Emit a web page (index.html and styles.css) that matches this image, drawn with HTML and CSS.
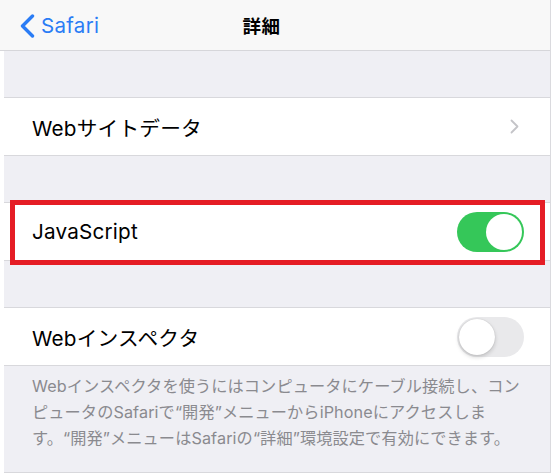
FILE: index.html
```html
<!DOCTYPE html>
<html lang="ja">
<head>
<meta charset="utf-8">
<link rel="stylesheet" href="styles.css">
</head>
<body>
<div class="screen">
  <header class="nav">
    <a class="back">
      <svg class="back-icon" width="16" height="24" viewBox="0 0 16 24"><path d="M13.5 2 L3.5 12 L13.5 22" fill="none" stroke="#2a7cf5" stroke-width="3.4" stroke-linecap="round" stroke-linejoin="round"/></svg>
      <span>Safari</span>
    </a>
    <h1 class="title">詳細</h1>
    <span></span>
  </header>

  <div class="spacer"></div>
  <div class="row">
    <span class="label">Webサイトデータ</span>
    <svg class="chevron" width="9" height="15" viewBox="0 0 9 15"><path d="M1.5 1.5 L7.5 7.5 L1.5 13.5" fill="none" stroke="#c4c4c8" stroke-width="1.8" stroke-linecap="round" stroke-linejoin="round"/></svg>
  </div>

  <div class="spacer"></div>
  <div class="row">
    <span class="label">JavaScript</span>
    <span class="switch on"><span class="knob"></span></span>
    <div class="highlight"></div>
  </div>

  <div class="spacer"></div>
  <div class="row">
    <span class="label">Webインスペクタ</span>
    <span class="switch off"><span class="knob"></span></span>
  </div>
  <p class="footer">Webインスペクタを使うにはコンピュータにケーブル接続し、コン<br>ピュータのSafariで“開発”メニューからiPhoneにアクセスしま<br>す。“開発”メニューはSafariの“詳細”環境設定で有効にできます。</p>
</div>
</body>
</html>
```
FILE: styles.css
```css
html, body {
  margin: 0;
  padding: 0;
  background: #ffffff;
}
body {
  font-family: "Inter", "Noto Sans CJK JP", sans-serif;
  color: #000;
}
.screen {
  margin-left: 4px;
  width: 546px;
  background: #efeff4;
  border-right: 1px solid #dadade;
  border-bottom: 1px solid #d8d8dc;
}
.nav {
  height: 50px;
  background: #f8f8f8;
  border-bottom: 1px solid #d6d6da;
  display: grid;
  grid-template-columns: 1fr auto 1fr;
  align-items: center;
  margin-left: -4px;
  padding-left: 4px;
  padding-right: 31px;
}
.back {
  display: flex;
  align-items: center;
  gap: 6px;
  padding-left: 15px;
  color: #2a7cf5;
  font-size: 20.5px;
  letter-spacing: 0.3px;
}
.back-icon {
  display: block;
  margin-top: 1px;
}
.title {
  margin: 0;
  font-size: 18.5px;
  font-weight: 600;
  letter-spacing: 0.5px;
}
.spacer {
  height: 46px;
}
.row {
  position: relative;
  height: 57px;
  background: #fff;
  border-top: 1px solid #d8d8dc;
  border-bottom: 1px solid #d8d8dc;
  display: flex;
  align-items: center;
  justify-content: space-between;
  padding: 0 26px 0 28px;
}
.label {
  font-size: 20.7px;
  letter-spacing: 0.2px;
}
.chevron {
  margin-right: 5px;
}
.switch {
  position: relative;
  width: 67px;
  height: 40px;
  border-radius: 20px;
  box-sizing: border-box;
}
.switch.on {
  background: #35c759;
}
.switch.off {
  background: #e9e9eb;
}
.knob {
  position: absolute;
  top: 2px;
  width: 36px;
  height: 36px;
  border-radius: 50%;
  background: #fff;
}
.switch.on .knob {
  right: 2px;
}
.switch.off .knob {
  left: 2px;
  box-shadow: 0 2px 4px rgba(0,0,0,0.18), 0 0 1px rgba(0,0,0,0.2);
}
.highlight {
  position: absolute;
  left: 6px;
  right: 5px;
  top: -3px;
  bottom: -5px;
  border: 5px solid #e51d25;
  pointer-events: none;
}
.footer {
  margin: 0;
  padding: 7px 26px 21px 28px;
  font-size: 16.2px;
  line-height: 26px;
  color: #8a8a8f;
  letter-spacing: 0.1px;
  white-space: nowrap;
}
```
